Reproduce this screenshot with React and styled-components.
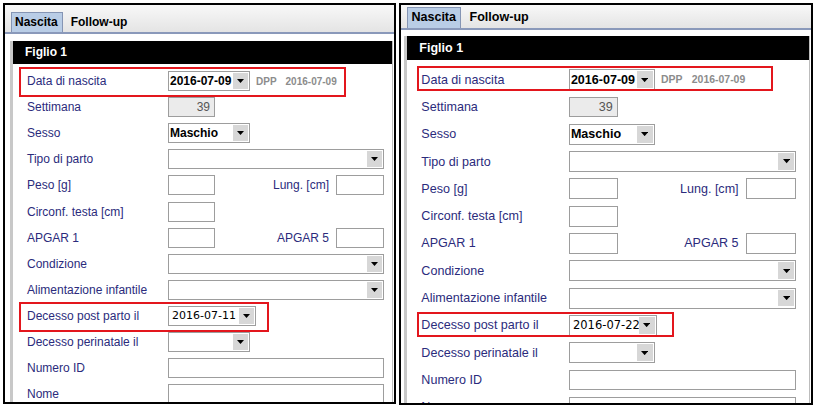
import styled, { createGlobalStyle } from "styled-components";

const GlobalStyle = createGlobalStyle`
  html, body {
    margin: 0;
    background: #fff;
  }
  body {
    font-family: "Liberation Sans", Arial, sans-serif;
  }
`;

const rows = [
  { label: "Data di nascita", kind: "birth" },
  { label: "Settimana", kind: "week" },
  { label: "Sesso", kind: "combo", value: "Maschio", w: 82 },
  { label: "Tipo di parto", kind: "combo" },
  { label: "Peso [g]", kind: "pair", side: "Lung. [cm]" },
  { label: "Circonf. testa [cm]", kind: "box", w: 47 },
  { label: "APGAR 1", kind: "pair", side: "APGAR 5" },
  { label: "Condizione", kind: "combo" },
  { label: "Alimentazione infantile", kind: "combo" },
  { label: "Decesso post parto il", kind: "death" },
  { label: "Decesso perinatale il", kind: "combo", w: 82 },
  { label: "Numero ID", kind: "box" },
  { label: "Nome", kind: "box" },
];

const DropButton = () => (
  <DropBtn>
    <svg width="7" height="4" viewBox="0 0 7 4">
      <path d="M0 0h7L3.5 4z" fill="#000" />
    </svg>
  </DropBtn>
);

const Combo = ({ value, w, plain }) => (
  <ComboBox $w={w}>
    <ComboValue $plain={plain}>{value}</ComboValue>
    <DropButton />
  </ComboBox>
);

const FieldFor = ({ row, deathDate, deathWidth }) => {
  switch (row.kind) {
    case "birth":
      return (
        <>
          <Combo value="2016-07-09" w={82} />
          <Due>
            <span>DPP</span>
            <span>2016-07-09</span>
          </Due>
        </>
      );
    case "week":
      return (
        <TextBox $w={47} $disabled>
          39
        </TextBox>
      );
    case "combo":
      return <Combo value={row.value} w={row.w} />;
    case "pair":
      return (
        <>
          <TextBox $w={47} />
          <SideLabel>{row.side}</SideLabel>
          <TextBox $w={48} />
        </>
      );
    case "death":
      return <Combo value={deathDate} w={deathWidth} plain />;
    default:
      return <TextBox $w={row.w} />;
  }
};

const FormWindow = ({ zoom = 1, width, height, tabTop, bodyTop, rowsTop, rowsRight, inset, deathDate, deathWidth, marks }) => (
  <Window $zoom={zoom} $width={width} $height={height}>
    <TabBar $top={tabTop}>
      <Tab $active>Nascita</Tab>
      <Tab>Follow-up</Tab>
    </TabBar>
    <Body $top={bodyTop} $inset={inset}>
      <Card>
        <CardHeader>Figlio 1</CardHeader>
        <Rows $top={rowsTop} $right={rowsRight}>
          {rows.map((row, i) => (
            <Row key={row.label}>
              {marks[i] && <Mark {...marks[i]} />}
              <Label>{row.label}</Label>
              <FieldFor row={row} deathDate={deathDate} deathWidth={deathWidth} />
            </Row>
          ))}
        </Rows>
      </Card>
    </Body>
  </Window>
);

const App = () => (
  <>
    <GlobalStyle />
    <Page>
      <FormWindow
        width={393}
        height={401}
        tabTop={7}
        bodyTop={7}
        rowsTop={4}
        rowsRight={8}
        inset={5}
        deathDate="2016-07-11"
        deathWidth={88}
        marks={{
          0: { $left: 6, $top: -1, $w: 327, $h: 30 },
          9: { $left: 6, $top: -1, $w: 250, $h: 30 },
        }}
      />
      <FormWindow
        zoom={1.046}
        width={396}
        height={384}
        tabTop={2}
        bodyTop={5.5}
        rowsTop={6}
        rowsRight={12.5}
        inset={2.6}
        deathDate="2016-07-22"
        deathWidth={84}
        marks={{
          0: { $left: 9.6, $top: 0, $w: 341, $h: 24 },
          9: { $left: 9.6, $top: 0.5, $w: 246, $h: 24 },
        }}
      />
    </Page>
  </>
);

export default App;

const Page = styled.div`
  display: flex;
  align-items: flex-start;
  gap: 3px;
  width: 816px;
  height: 408px;
  padding: 3px 0 0 3px;
  box-sizing: border-box;
  overflow: hidden;
`;

const Window = styled.div`
  zoom: ${p => p.$zoom};
  width: ${p => p.$width}px;
  height: ${p => p.$height}px;
  flex: none;
  box-sizing: border-box;
  border: 2px solid #000;
  background: #fff;
  overflow: hidden;
  display: flex;
  flex-direction: column;
`;

const TabBar = styled.div`
  display: flex;
  align-items: flex-end;
  gap: 4px;
  padding: ${p => p.$top}px 0 0 6px;
  background: linear-gradient(#f8f8f8, #e4e4e4);
  border-bottom: 2px solid #8a99ba;
  flex: none;
`;

const Tab = styled.div`
  height: 20px;
  line-height: 19px;
  box-sizing: border-box;
  padding: 0 4px 0 3px;
  font-size: 12px;
  font-weight: bold;
  color: #000;
  background: ${p => (p.$active ? "#b9cde6" : "transparent")};
  border: 1px solid ${p => (p.$active ? "#8595b4" : "transparent")};
  border-bottom: none;
`;

const Body = styled.div`
  flex: 1;
  min-height: 0;
  padding: ${p => p.$top}px 1px 0 ${p => p.$inset}px;
  background: #fff;
`;

const Card = styled.div`
  height: 100%;
  border-left: 3px solid #c8c8c8;
  border-right: 1px solid #bcbcbc;
`;

const CardHeader = styled.div`
  height: 23px;
  line-height: 23px;
  padding-left: 12px;
  background: #000;
  color: #fff;
  font-size: 12px;
  font-weight: bold;
`;

const Rows = styled.div`
  display: grid;
  grid-auto-rows: 26.1px;
  padding: ${p => p.$top}px ${p => p.$right}px 0 14px;
`;

const Row = styled.div`
  position: relative;
  display: flex;
  align-items: center;
`;

const Mark = styled.div`
  position: absolute;
  left: ${p => p.$left - 14}px;
  top: ${p => p.$top}px;
  width: ${p => p.$w}px;
  height: ${p => p.$h}px;
  box-sizing: border-box;
  border: 2px solid #e3161d;
  pointer-events: none;
`;

const Label = styled.div`
  width: 141px;
  flex: none;
  font-size: 12px;
  color: #2b2b7c;
  white-space: nowrap;
`;

const SideLabel = styled.div`
  flex: 1;
  padding-right: 7px;
  text-align: right;
  font-size: 12px;
  color: #2b2b7c;
`;

const TextBox = styled.div`
  box-sizing: border-box;
  height: 20px;
  width: ${p => (p.$w ? `${p.$w}px` : "auto")};
  flex: ${p => (p.$w ? "none" : 1)};
  padding-right: 4px;
  border: 1px solid #9d9d9d;
  background: ${p => (p.$disabled ? "#ebebeb" : "#fff")};
  color: #555;
  font-size: 12px;
  line-height: 18px;
  text-align: right;
`;

const ComboBox = styled.div`
  box-sizing: border-box;
  height: 20px;
  width: ${p => (p.$w ? `${p.$w}px` : "auto")};
  flex: ${p => (p.$w ? "none" : 1)};
  display: flex;
  align-items: center;
  border: 1px solid #9d9d9d;
  background: #fff;
`;

const ComboValue = styled.div`
  flex: 1;
  min-width: 0;
  padding-left: ${p => (p.$plain ? 3 : 1)}px;
  font-family: ${p => (p.$plain ? '"DejaVu Sans", sans-serif' : "inherit")};
  font-size: ${p => (p.$plain ? 11 : 12)}px;
  font-weight: ${p => (p.$plain ? "normal" : "bold")};
  color: #000;
  white-space: nowrap;
  overflow: hidden;
`;

const DropBtn = styled.div`
  width: 15px;
  height: 16px;
  margin-right: 1px;
  flex: none;
  display: flex;
  align-items: center;
  justify-content: center;
  background: #d7d7d7;
`;

const Due = styled.div`
  display: flex;
  gap: 9px;
  margin-left: 6px;
  font-size: 10px;
  font-weight: bold;
  color: #8c8c8c;
`;
